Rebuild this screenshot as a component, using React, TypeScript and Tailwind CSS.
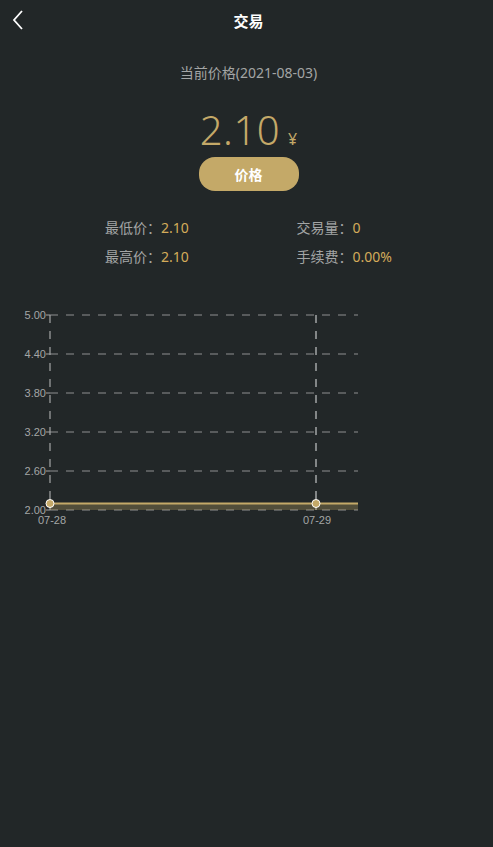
import React from "react"

const gridValues = ["5.00", "4.40", "3.80", "3.20", "2.60", "2.00"]

function PriceChart() {
  // plot area in svg coords
  const top = 19
  const bottom = 214
  const left = 50
  const right = 358
  const step = (bottom - top) / 5
  const lineY = bottom - ((2.1 - 2.0) / 3.0) * (bottom - top)

  return (
    <svg width="493" height="240" className="block">
      {gridValues.map((v, i) => {
        const y = top + i * step
        return (
          <g key={v}>
            <line x1={left} x2={right} y1={y} y2={y} stroke="#8e9090" strokeWidth="1.2" strokeDasharray="8 8" />
            <line x1={left - 4} x2={left} y1={y} y2={y} stroke="#8e9090" strokeWidth="1.2" />
            <text x={left - 4} y={y + 4} textAnchor="end" fontSize="11" fill="#a4a6a6" fontFamily="Liberation Sans, Arial, sans-serif">
              {v}
            </text>
          </g>
        )
      })}
      <line x1={left} x2={left} y1={top} y2={bottom} stroke="#a4a6a6" strokeWidth="1.2" strokeDasharray="8 8" />
      <line x1="316" x2="316" y1={top} y2={bottom} stroke="#c4c6c6" strokeWidth="1.2" strokeDasharray="8 8" />
      <rect x={left} y={lineY} width={right - left} height={bottom - lineY} fill="#c4a968" fillOpacity="0.3" />
      <line x1={left} x2={right} y1={lineY} y2={lineY} stroke="#c4a968" strokeWidth="2" />
      <circle cx={left} cy={lineY} r="4" fill="#c4a968" stroke="#ffffff" strokeWidth="1" />
      <circle cx="316" cy={lineY} r="4" fill="#c4a968" stroke="#ffffff" strokeWidth="1" />
      <text x={left + 2} y={bottom + 14} textAnchor="middle" fontSize="11" fill="#a4a6a6" fontFamily="Liberation Sans, Arial, sans-serif">
        07-28
      </text>
      <text x="317" y={bottom + 14} textAnchor="middle" fontSize="11" fill="#a4a6a6" fontFamily="Liberation Sans, Arial, sans-serif">
        07-29
      </text>
    </svg>
  )
}

export default function App() {
  return (
    <div
      className="w-[493px] h-[847px] bg-[#222728] overflow-hidden"
      style={{ fontFamily: '"Noto Sans", "Noto Sans CJK SC", sans-serif' }}
    >
      {/* header */}
      <div className="relative h-[42px] pl-[4px] flex items-center justify-center">
        <button className="absolute left-[10px] top-[9px] p-0">
          <svg width="16" height="22" viewBox="0 0 16 22">
            <path d="M12 2 L4 11 L12 20" fill="none" stroke="#ffffff" strokeWidth="1.8" />
          </svg>
        </button>
        <h1 className="text-[15px] font-bold text-white leading-none">交易</h1>
      </div>

      <div className="flex flex-col items-center pl-[4px]">
        <p className="mt-[21px] text-[14px] leading-[20px] text-[#a3a5a5]">当前价格(2021-08-03)</p>
        <div className="mt-[23px] flex items-baseline gap-[8px] text-[#c4a968]">
          <span className="text-[40px] font-light leading-[48px] tracking-[0.5px]">2.10</span>
          <span className="text-[16px] leading-none">¥</span>
        </div>
        <button className="mt-[3px] w-[100px] h-[34px] rounded-[16px] bg-[#c4a968] text-white text-[14px] font-bold">
          价格
        </button>
      </div>

      <div className="mt-[27px] grid grid-cols-2 gap-y-[9px] text-[14px] leading-[20px]">
        <div className="pl-[105px] text-[#a3a5a5]">
          最低价：<span className="text-[#d4ab5a]">2.10</span>
        </div>
        <div className="pl-[50px] text-[#a3a5a5]">
          交易量：<span className="text-[#d4ab5a]">0</span>
        </div>
        <div className="pl-[105px] text-[#a3a5a5]">
          最高价：<span className="text-[#d4ab5a]">2.10</span>
        </div>
        <div className="pl-[50px] text-[#a3a5a5]">
          手续费：<span className="text-[#d4ab5a]">0.00%</span>
        </div>
      </div>

      <div className="mt-[29px]">
        <PriceChart />
      </div>
    </div>
  )
}
